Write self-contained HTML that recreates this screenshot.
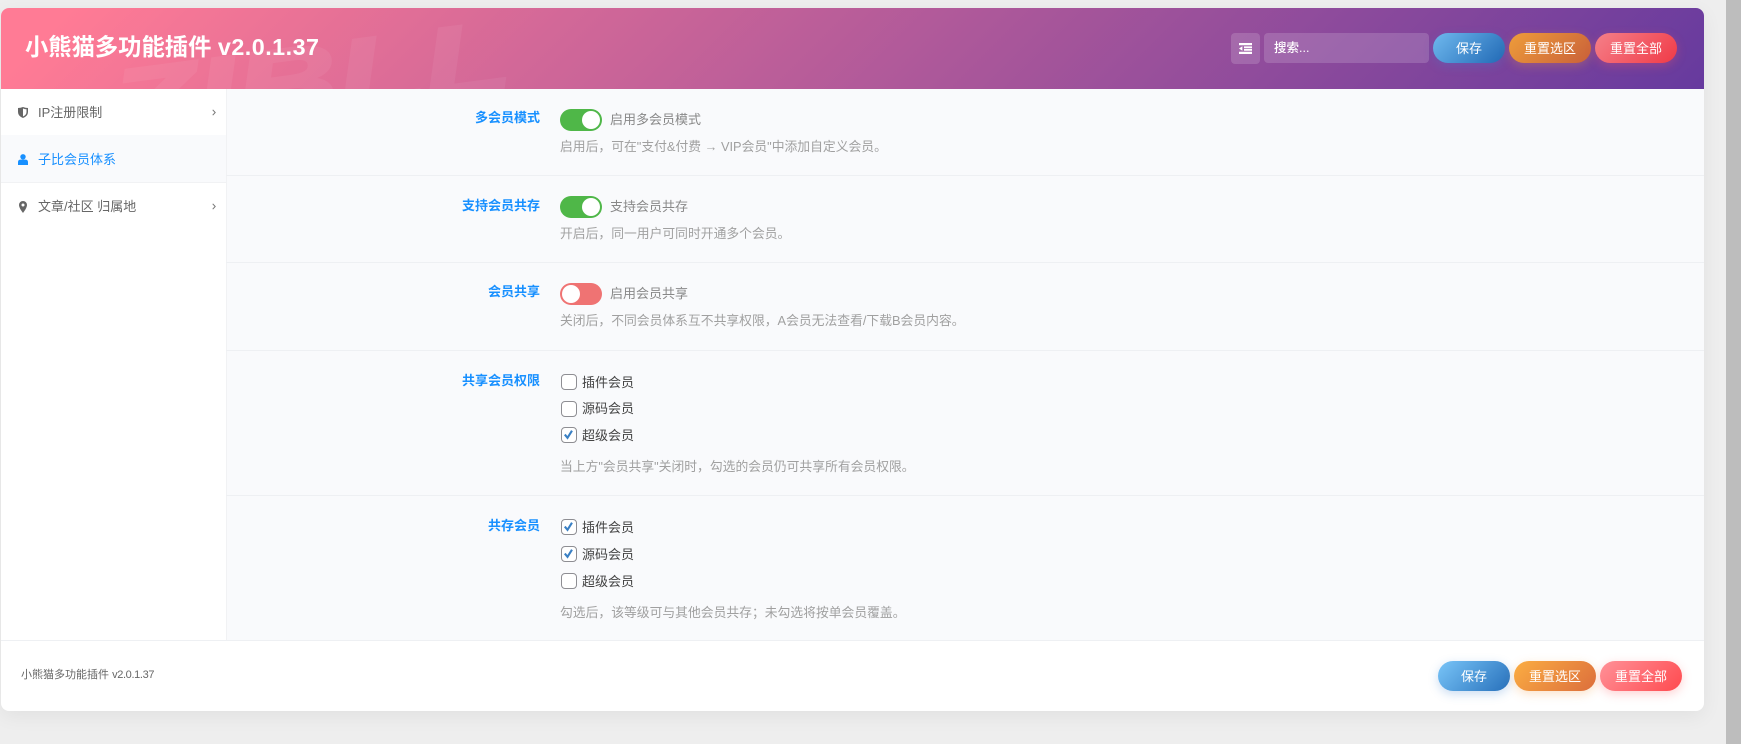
<!DOCTYPE html>
<html lang="zh"><head><meta charset="utf-8"><title>小熊猫多功能插件</title>
<style>
*{box-sizing:border-box}
html,body{margin:0;padding:0;width:1741px;height:744px;overflow:hidden;background:#eeeeee;font-family:"Liberation Sans","Noto Sans CJK SC",sans-serif}
.a{position:absolute;white-space:nowrap}
#sb{position:absolute;left:1726px;top:0;width:15px;height:744px;background:#bdbdbd}
#card{position:absolute;left:1px;top:8px;width:1703px;height:703px;background:#fff;border-radius:8px;overflow:hidden;box-shadow:0 5px 20px rgba(0,0,0,.06)}
#hd{position:absolute;left:1px;top:8px;width:1703px;height:81px;border-radius:8px 8px 0 0;overflow:hidden;background:linear-gradient(135deg,#ff7b95 0%,#ff7b95 4%,#663a9e 100%)}
#wm{position:absolute;left:114px;top:49px;height:100px;font-size:100px;line-height:100px;font-weight:bold;font-style:italic;color:#fff;-webkit-text-stroke:3px #fff;opacity:.06;white-space:nowrap;transform-origin:0 84.6px;transform:rotate(-7.5deg) scaleX(1.42)}
#ttl{left:25px;top:30px;height:34px;line-height:34px;font-size:23.3px;font-weight:bold;color:#fff}
#ttl span{letter-spacing:.5px}
.ib{position:absolute;background:rgba(255,255,255,.16);border-radius:4px}
.btn{position:absolute;height:30px;line-height:31px;border-radius:15px;color:#fff;font-size:13px;text-align:center}
.blue{background:linear-gradient(135deg,#79c5f8,#2770bb);box-shadow:0 3px 10px rgba(60,130,210,.28)}
.org{background:linear-gradient(135deg,#fbad42,#dc6e3c);box-shadow:0 3px 10px rgba(240,150,60,.28)}
.red{background:linear-gradient(135deg,#ff9198,#ff4a4f);box-shadow:0 3px 10px rgba(255,90,95,.28)}
.hdb.blue{background:linear-gradient(135deg,#6fb9ee,#2169b5)}
.hdb.org{background:linear-gradient(135deg,#ee9d3a,#c9603a)}
.hdb.red{background:linear-gradient(135deg,#f58089,#f03a47)}
#main{position:absolute;left:226px;top:89px;width:1478px;height:551px;background:#f9fafc}
.hr{position:absolute;left:226px;width:1478px;height:1px;background:#eef0f3}
#sd{position:absolute;left:226px;top:89px;width:1px;height:551px;background:#f1f2f4}
.si{position:absolute;left:1px;width:225px;height:47px;background:#fff;border-bottom:1px solid #f1f2f4}
.st{left:38px;height:20px;line-height:20px;font-size:13px;color:#666}
.lb{right:1201px;height:20px;line-height:20px;font-size:13px;font-weight:bold;color:#1890ff;text-align:right}
.tl{left:610px;height:20px;line-height:20px;font-size:13px;color:#888}
.ds{left:560px;height:20px;line-height:20px;font-size:12.8px;color:#a0a0a0}
.cl{left:582px;height:20px;line-height:20px;font-size:13px;color:#444}
.tg{position:absolute;left:560px;width:42px;height:22px;border-radius:11px}
.tg i{position:absolute;top:2px;width:18px;height:18px;border-radius:50%;background:#fff}
.on{background:#4fb748}.on i{left:22px}
.off{background:#ef7373}.off i{left:2px}
.cb{position:absolute;left:561px;width:16px;height:16px;border:1.4px solid #8e8e93;border-radius:4px;background:#fff}
.cb svg{position:absolute;left:0;top:0}
#ft{left:21px;top:665px;height:20px;line-height:20px;font-size:11px;color:#666}
#ft span{letter-spacing:-.35px}
</style></head><body>
<div id="sb"></div>
<div id="card"></div>
<div id="hd"><div id="wm">ZIBLL</div></div>
<div class="a" id="ttl">小熊猫多功能插件 <span>v2.0.1.37</span></div>

<div class="ib" style="left:1231px;top:33px;width:29px;height:31px"></div>
<svg class="a" style="left:1239px;top:43px" width="13" height="11" viewBox="0 0 13 11"><path fill="#fff" d="M0 0h13v2.200H0zM5 3.400h8v1.800H5zM5 6h8v1.800H5zM0 8.800h13V11H0zM3.400 3.200v4.600L0 5.500z"/></svg>
<div class="ib" style="left:1264px;top:33px;width:165px;height:30px"></div>
<div class="a" style="left:1274px;top:38px;height:20px;line-height:20px;font-size:12.5px;color:#fff;font-weight:500">搜索...</div>
<div class="btn hdb blue" style="left:1433px;top:33px;width:72px">保存</div>
<div class="btn hdb org" style="left:1509px;top:33px;width:82px">重置选区</div>
<div class="btn hdb red" style="left:1595px;top:33px;width:82px">重置全部</div>

<div id="main"></div>
<div id="sd"></div>
<div class="si" style="top:89px"></div>
<div class="si" style="top:182px;height:46px;border-bottom:0;border-top:1px solid #f1f2f4"></div>
<div class="a" style="left:1px;top:135px;width:225px;height:47px;background:#f9fafc"></div>

<svg class="a" style="left:18px;top:107px" width="10" height="11" viewBox="0 0 10 11"><path fill="#666" d="M0 1Q2.500 1 5 0Q7.500 1 10 1V5Q10 9 5 11Q0 9 0 5zM5 1.500V9.500Q8.500 8 8.500 5V2.300Q7 2.300 5 1.500z"/></svg>
<div class="a st" style="top:103px">IP注册限制</div>
<svg class="a" style="left:212px;top:109px" width="4" height="7" viewBox="0 0 4 7"><path d="M.7.800l2.500 2.700L.7 6.200" fill="none" stroke="#777" stroke-width="1"/></svg>

<svg class="a" style="left:18px;top:154px" width="10" height="11" viewBox="0 0 10 11"><circle cx="5" cy="2.800" r="2.700" fill="#1890ff"/><path fill="#1890ff" d="M0 11V8.200Q0 5.600 2.500 5.600H7.500Q10 5.600 10 8.200V11z"/></svg>
<div class="a st" style="top:150px;color:#1890ff">子比会员体系</div>

<svg class="a" style="left:19px;top:201px" width="8" height="12" viewBox="0 0 8 12"><path fill="#666" fill-rule="evenodd" d="M4 0a4 4 0 0 1 4 4C8 6.500 5.500 10 4 12 2.500 10 0 6.500 0 4a4 4 0 0 1 4-4zM4 2.500a1.500 1.500 0 1 0 0 3 1.500 1.500 0 0 0 0-3z"/></svg>
<div class="a st" style="top:197px">文章/社区 归属地</div>
<svg class="a" style="left:212px;top:203px" width="4" height="7" viewBox="0 0 4 7"><path d="M.7.800l2.500 2.700L.7 6.200" fill="none" stroke="#777" stroke-width="1"/></svg>

<div class="hr" style="top:175px"></div>
<div class="hr" style="top:262px"></div>
<div class="hr" style="top:350px"></div>
<div class="hr" style="top:495px"></div>
<div class="a" style="left:1px;top:640px;width:1703px;height:1px;background:#eef0f3"></div>

<div class="a lb" style="top:108px">多会员模式</div>
<div class="tg on" style="top:109px"><i></i></div>
<div class="a tl" style="top:110px">启用多会员模式</div>
<div class="a ds" style="top:137px">启用后，可在"支付&amp;付费 → VIP会员"中添加自定义会员。</div>

<div class="a lb" style="top:196px">支持会员共存</div>
<div class="tg on" style="top:196px"><i></i></div>
<div class="a tl" style="top:197px">支持会员共存</div>
<div class="a ds" style="top:224px">开启后，同一用户可同时开通多个会员。</div>

<div class="a lb" style="top:282px">会员共享</div>
<div class="tg off" style="top:283px"><i></i></div>
<div class="a tl" style="top:284px">启用会员共享</div>
<div class="a ds" style="top:311px">关闭后，不同会员体系互不共享权限，A会员无法查看/下载B会员内容。</div>

<div class="a lb" style="top:371px">共享会员权限</div>
<div class="cb" style="top:374px"></div><div class="a cl" style="top:373px">插件会员</div>
<div class="cb" style="top:401px"></div><div class="a cl" style="top:399px">源码会员</div>
<div class="cb" style="top:427px"><svg width="13" height="13" viewBox="0 0 13 13"><path d="M2.800 6.600l2.700 3.200L10 2.700" fill="none" stroke="#3a80c4" stroke-width="2.100"/></svg></div><div class="a cl" style="top:426px">超级会员</div>
<div class="a ds" style="top:457px">当上方"会员共享"关闭时，勾选的会员仍可共享所有会员权限。</div>

<div class="a lb" style="top:516px">共存会员</div>
<div class="cb" style="top:519px"><svg width="13" height="13" viewBox="0 0 13 13"><path d="M2.800 6.600l2.700 3.200L10 2.700" fill="none" stroke="#3a80c4" stroke-width="2.100"/></svg></div><div class="a cl" style="top:518px">插件会员</div>
<div class="cb" style="top:546px"><svg width="13" height="13" viewBox="0 0 13 13"><path d="M2.800 6.600l2.700 3.200L10 2.700" fill="none" stroke="#3a80c4" stroke-width="2.100"/></svg></div><div class="a cl" style="top:545px">源码会员</div>
<div class="cb" style="top:573px"></div><div class="a cl" style="top:572px">超级会员</div>
<div class="a ds" style="top:603px">勾选后，该等级可与其他会员共存；未勾选将按单会员覆盖。</div>

<div class="a" id="ft">小熊猫多功能插件 <span>v2.0.1.37</span></div>
<div class="btn blue" style="left:1438px;top:661px;width:72px">保存</div>
<div class="btn org" style="left:1514px;top:661px;width:82px">重置选区</div>
<div class="btn red" style="left:1600px;top:661px;width:82px">重置全部</div>
</body></html>
